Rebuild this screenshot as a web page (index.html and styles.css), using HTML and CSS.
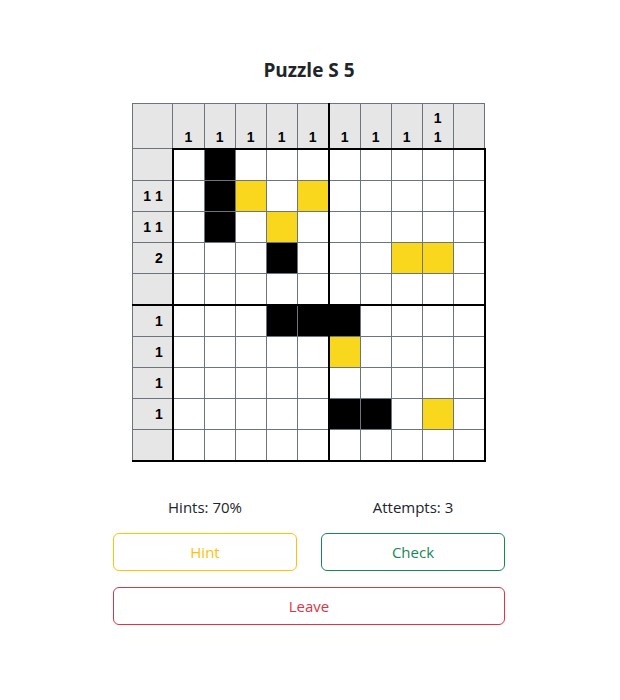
FILE: index.html
```html
<!DOCTYPE html>
<html lang="en">
<head>
<meta charset="utf-8">
<title>Puzzle S 5</title>
<link rel="stylesheet" href="styles.css">
</head>
<body>
<main class="page">
  <h1 class="title">Puzzle S 5</h1>
  <table class="grid">
    <thead>
      <tr>
        <th class="corner"></th>
        <th class="cc"><div>1</div></th>
        <th class="cc"><div>1</div></th>
        <th class="cc"><div>1</div></th>
        <th class="cc"><div>1</div></th>
        <th class="cc"><div>1</div></th>
        <th class="cc"><div>1</div></th>
        <th class="cc"><div>1</div></th>
        <th class="cc"><div>1</div></th>
        <th class="cc"><div>1</div><div>1</div></th>
        <th class="cc"></th>
      </tr>
    </thead>
    <tbody>
      <tr><th class="rc"></th><td></td><td class="f"></td><td></td><td></td><td></td><td></td><td></td><td></td><td></td><td></td></tr>
      <tr><th class="rc">1 1</th><td></td><td class="f"></td><td class="y"></td><td></td><td class="y"></td><td></td><td></td><td></td><td></td><td></td></tr>
      <tr><th class="rc">1 1</th><td></td><td class="f"></td><td></td><td class="y"></td><td></td><td></td><td></td><td></td><td></td><td></td></tr>
      <tr><th class="rc">2</th><td></td><td></td><td></td><td class="f"></td><td></td><td></td><td></td><td class="y"></td><td class="y"></td><td></td></tr>
      <tr><th class="rc"></th><td></td><td></td><td></td><td></td><td></td><td></td><td></td><td></td><td></td><td></td></tr>
      <tr><th class="rc">1</th><td></td><td></td><td></td><td class="f"></td><td class="f"></td><td class="f"></td><td></td><td></td><td></td><td></td></tr>
      <tr><th class="rc">1</th><td></td><td></td><td></td><td></td><td></td><td class="y"></td><td></td><td></td><td></td><td></td></tr>
      <tr><th class="rc">1</th><td></td><td></td><td></td><td></td><td></td><td></td><td></td><td></td><td></td><td></td></tr>
      <tr><th class="rc">1</th><td></td><td></td><td></td><td></td><td></td><td class="f"></td><td class="f"></td><td></td><td class="y"></td><td></td></tr>
      <tr><th class="rc"></th><td></td><td></td><td></td><td></td><td></td><td></td><td></td><td></td><td></td><td></td></tr>
    </tbody>
  </table>
  <div class="stats">
    <div class="stat">Hints: 70%</div>
    <div class="stat">Attempts: 3</div>
  </div>
  <div class="actions">
    <button class="btn btn-hint">Hint</button>
    <button class="btn btn-check">Check</button>
    <button class="btn btn-leave">Leave</button>
  </div>
</main>
</body>
</html>
```
FILE: styles.css
```css
html, body {
  margin: 0;
  padding: 0;
  background: #fff;
}
body {
  padding-right: 2px;
  font-family: "Open Sans", "Noto Sans", sans-serif;
  color: #212529;
}
.page {
  width: 392px;
  margin: 0 auto;
  padding-top: 57px;
  display: flex;
  flex-direction: column;
  align-items: center;
}
.title {
  margin: 0 0 20px;
  font-size: 19px;
  line-height: 26px;
  font-weight: 700;
}
.grid {
  border-collapse: collapse;
  font-family: "Liberation Sans", Arial, sans-serif;
  font-weight: 700;
  font-size: 14px;
  color: #000;
}
.grid th, .grid td {
  border: 1px solid #6c757d;
  padding: 0;
}
.grid td {
  width: 30px;
  height: 30px;
  background: #fff;
}
.grid td.f { background: #000; }
.grid td.y { background: #f9d71c; }
.grid th {
  background: #e6e6e6;
}
.corner {
  width: 39px;
  height: 44px;
}
.cc {
  vertical-align: bottom;
  text-align: center;
  line-height: 19px;
  padding-bottom: 1px !important;
}
.rc {
  text-align: right;
  padding-right: 9px !important;
  font-weight: 700;
  white-space: nowrap;
}
thead .cc { border-bottom: 2px solid #000; }
tbody td:nth-child(2) { border-left: 2px solid #000; }
tbody td:nth-child(11) { border-right: 2px solid #000; }
.grid tr > :nth-child(6) { border-right: 2px solid #000; }
tbody tr:nth-child(5) > *,
tbody tr:last-child > * { border-bottom: 2px solid #000; }

.stats {
  margin-top: 34px;
  width: 100%;
  display: grid;
  grid-template-columns: 1fr 1fr;
  column-gap: 24px;
  font-size: 15px;
  line-height: 22px;
}
.stat { text-align: center; }
.actions {
  margin-top: 15px;
  width: 100%;
  display: grid;
  grid-template-columns: 1fr 1fr;
  gap: 16px 24px;
}
.btn {
  height: 38px;
  border: 1px solid;
  border-radius: 6px;
  background: #fff;
  font-family: inherit;
  font-size: 15px;
  padding: 0;
}
.btn-hint { color: #ffc107; border-color: #ffc107; }
.btn-check { color: #198754; border-color: #198754; }
.btn-leave { color: #dc3545; border-color: #dc3545; grid-column: 1 / span 2; }
```
